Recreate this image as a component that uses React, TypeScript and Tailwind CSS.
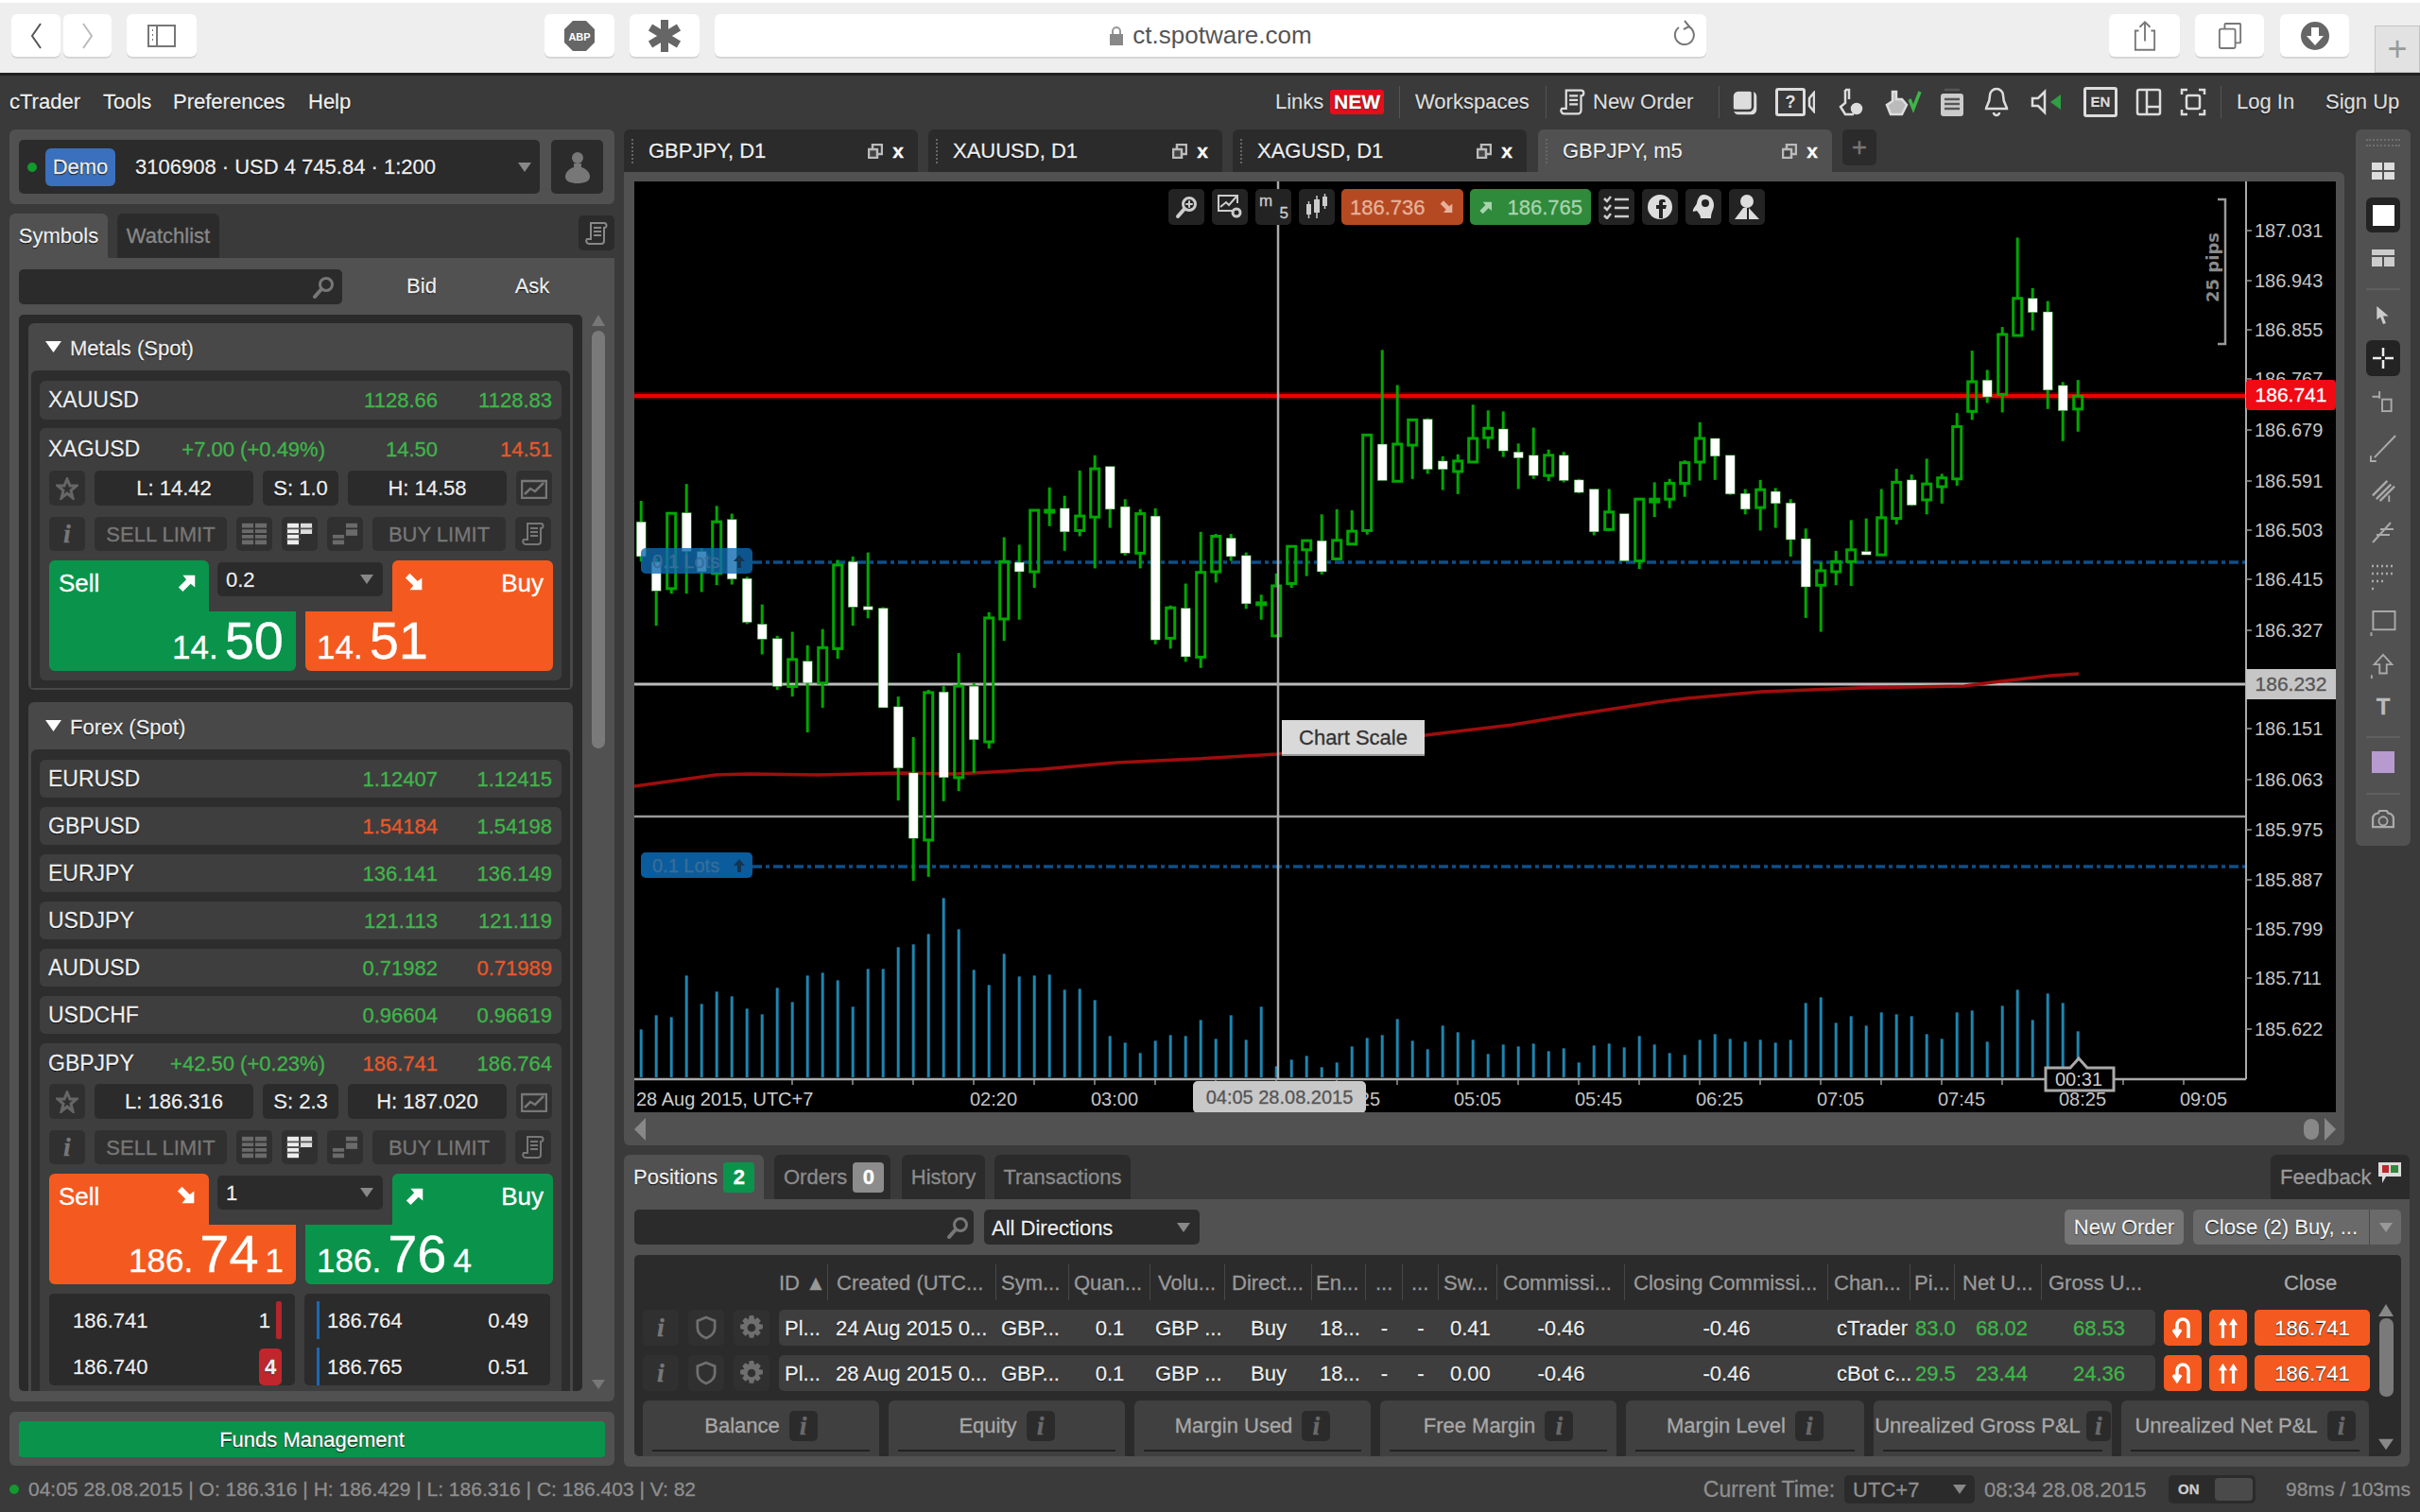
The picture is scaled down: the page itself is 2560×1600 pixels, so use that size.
import React from "react";

const ts = "[text-shadow:0_0_1px_#000,0_1px_1px_#000]";
const G = "text-[#3fb54a]";
const R = "text-[#e8582a]";

const Mag = ({ className = "w-[24px] h-[24px]", plus = false }: { className?: string; plus?: boolean }) => (
  <svg viewBox="0 0 24 24" className={className} fill="none" stroke="currentColor" strokeWidth="3" strokeLinecap="round">
    <circle cx="15" cy="9" r="6.5" />
    <path d="M10 14 L3 22" strokeWidth="4" />
    {plus && <path d="M15 6v6M12 9h6" strokeWidth="2" />}
  </svg>
);
const Scroll = ({ className = "w-[26px] h-[30px]" }: { className?: string }) => (
  <svg viewBox="0 0 24 28" className={className} fill="none" stroke="currentColor" strokeWidth="2">
    <path d="M6 3h14a2 2 0 0 1 0 5v14a3 3 0 0 1-3 3H4a3 3 0 0 1-2-5h4z" />
    <path d="M9 8h8M9 12h8M9 16h8" />
  </svg>
);
const Caret = ({ className = "" }: { className?: string }) => (
  <svg viewBox="0 0 14 10" className={`w-[14px] h-[10px] ${className}`} fill="currentColor"><path d="M0 0h14L7 10z" /></svg>
);
const Arrow = ({ down = false }: { down?: boolean }) => (
  <svg viewBox="0 0 24 24" className="w-[22px] h-[22px]" fill="#fff">
    <path transform={down ? "rotate(90 12 12)" : undefined} d="M2 18 L11 9 L7 4 H21 V18 L16 14 L7 23 Z" />
  </svg>
);
const Bars = ({ mode }: { mode: number }) => (
  <svg viewBox="0 0 30 26" className="w-[28px] h-[26px]">
    {mode === 0 && (<g fill="#6a6a6a"><rect x="1" y="1" width="13" height="24" /><rect x="16" y="1" width="13" height="24" /><path d="M0 7h30M0 13h30M0 19h30" stroke="#303030" strokeWidth="2" /></g>)}
    {mode === 1 && (<g><rect x="1" y="1" width="13" height="24" fill="#eee" /><rect x="16" y="1" width="13" height="12" fill="#ddd" /><path d="M0 7h30M0 13h16M0 19h16" stroke="#555" strokeWidth="2" /></g>)}
    {mode === 2 && (<g fill="#6a6a6a"><rect x="1" y="14" width="13" height="11" /><rect x="16" y="1" width="13" height="14" /><path d="M0 19h14M16 7h14" stroke="#303030" strokeWidth="2" /></g>)}
  </svg>
);
const Info = ({ className = "text-[#777]" }: { className?: string }) => (
  <span className={`[font-family:'Liberation_Serif',serif] italic font-bold text-[28px] leading-none ${className}`}>i</span>
);
const Square = ({ children, className = "" }: { children?: React.ReactNode; className?: string }) => (
  <div className={`w-[38px] h-full rounded-[5px] bg-[#303030] flex items-center justify-center text-[#777] shrink-0 ${className}`}>{children}</div>
);

function ChromeBtn({ className, children }: { className: string; children?: React.ReactNode }) {
  return <div className={`h-[45px] bg-white rounded-[6px] shadow-[0_2px_0_#d6d6d6] flex items-center justify-center shrink-0 ${className}`}>{children}</div>;
}

function BrowserBar() {
  return (
    <div className="h-[77px] bg-[#eeeeee] border-t-[3px] border-white pt-[12px] flex items-start shrink-0 text-[#666] [-webkit-text-stroke:0]">
      <ChromeBtn className="w-[52px] ml-[12px]"><svg viewBox="0 0 14 30" className="w-[14px] h-[30px]" fill="none" stroke="#555" strokeWidth="2"><path d="M12 2 L3 15 L12 28" /></svg></ChromeBtn>
      <ChromeBtn className="w-[51px] ml-[3px]"><svg viewBox="0 0 14 30" className="w-[14px] h-[30px]" fill="none" stroke="#bbb" strokeWidth="2"><path d="M2 2 L11 15 L2 28" /></svg></ChromeBtn>
      <ChromeBtn className="w-[74px] ml-[16px]"><svg viewBox="0 0 30 24" className="w-[30px] h-[24px]" fill="none" stroke="#777" strokeWidth="2"><rect x="1" y="1" width="28" height="22" /><path d="M10 1v22M5 6h1M5 11h1M5 16h1" /></svg></ChromeBtn>
      <ChromeBtn className="w-[74px] ml-[368px]">
        <svg viewBox="0 0 34 34" className="w-[34px] h-[34px]"><path d="M10 1h14l9 9v14l-9 9H10l-9-9V10z" fill="#666" /><text x="17" y="22" fontSize="11" fontWeight="700" textAnchor="middle" fill="#fff" fontFamily="Liberation Sans">ABP</text></svg>
      </ChromeBtn>
      <ChromeBtn className="w-[74px] ml-[16px]"><svg viewBox="0 0 36 36" className="w-[36px] h-[36px]" stroke="#666" strokeWidth="8"><path d="M18 1v34M3 9l30 18M33 9L3 27" /></svg></ChromeBtn>
      <ChromeBtn className="w-[1049px] ml-[16px] relative">
        <div className="flex items-center gap-[9px]">
          <svg viewBox="0 0 16 22" className="w-[16px] h-[22px]"><path d="M4 9V6a4 4 0 0 1 8 0v3" fill="none" stroke="#999" strokeWidth="2" /><rect x="1" y="9" width="14" height="12" fill="#888" /></svg>
          <span className="text-[26px] text-[#555]">ct.spotware.com</span>
        </div>
        <svg viewBox="0 0 24 30" className="absolute right-[12px] top-[6px] w-[24px] h-[30px]" fill="none" stroke="#777" strokeWidth="2"><path d="M17 7A10 10 0 1 1 7 8" /><path d="M13 1l5 6-6 3" /></svg>
      </ChromeBtn>
      <ChromeBtn className="w-[75px] ml-[426px]"><svg viewBox="0 0 26 36" className="w-[24px] h-[34px]" fill="none" stroke="#777" strokeWidth="2"><path d="M6 12H2v22h22V12h-4M13 24V2M7 8l6-6 6 6" /></svg></ChromeBtn>
      <ChromeBtn className="w-[73px] ml-[16px]"><svg viewBox="0 0 28 32" className="w-[26px] h-[30px]" fill="none" stroke="#777" strokeWidth="2"><rect x="2" y="8" width="18" height="22" rx="2" /><path d="M8 8V3a1 1 0 0 1 1-1h16a1 1 0 0 1 1 1v20a1 1 0 0 1-1 1h-5" /></svg></ChromeBtn>
      <ChromeBtn className="w-[73px] ml-[17px]"><svg viewBox="0 0 30 30" className="w-[30px] h-[30px]"><circle cx="15" cy="15" r="15" fill="#666" /><path d="M11 6h8v9h5l-9 10-9-10h5z" fill="#fff" /></svg></ChromeBtn>
      <div className="ml-[27px] mt-[12px] w-[48px] h-[50px] bg-[#e2e2e2] border border-[#c4c4c4] flex items-center justify-center text-[#999] text-[36px] font-light">+</div>
    </div>
  );
}

const Sep = ({ className }: { className: string }) => <div className={`w-px h-[34px] bg-[#555] ${className}`} />;

function TopIcon({ className, children, vb }: { className: string; children: React.ReactNode; vb: string }) {
  return <svg viewBox={vb} className={`h-[34px] shrink-0 ${className}`} fill="none" stroke="#ddd" strokeWidth="2.5">{children}</svg>;
}

function MenuBar() {
  return (
    <div className={`h-[58px] bg-[#3a3a3a] border-t-[3px] border-[#222] flex items-center shrink-0 text-[22px] text-[#eee] whitespace-nowrap ${ts}`}>
      <span className="ml-[10px] w-[99px]">cTrader</span>
      <span className="w-[74px]">Tools</span>
      <span className="w-[143px]">Preferences</span>
      <span>Help</span>
      <div className="ml-auto flex items-center text-[#ddd]">
        <span className="w-[53px]">Links</span>
        <span className="ml-[5px] w-[57px] h-[26px] leading-[26px] text-center bg-[#e60d1c] text-white font-bold rounded-[3px] text-[21px]">NEW</span>
        <Sep className="ml-[16px]" />
        <span className="ml-[16px] w-[122px]">Workspaces</span>
        <Sep className="ml-[16px]" />
        <Scroll className="ml-[14px] w-[27px] h-[34px] shrink-0" />
        <span className="ml-[8px] w-[107px]">New Order</span>
        <Sep className="ml-[26px]" />
        <TopIcon vb="0 0 30 34" className="ml-[12px] w-[30px]"><rect x="4" y="7" width="22" height="22" rx="4" fill="#ddd" /><rect x="1" y="4" width="22" height="22" rx="4" stroke="#3a3a3a" /></TopIcon>
        <div className="ml-[17px] w-[42px] h-[34px] flex items-center shrink-0">
          <div className="w-[32px] h-[30px] border-[3px] border-[#ddd] rounded-[3px] text-[18px] leading-[24px] text-center font-bold">?</div>
          <svg viewBox="0 0 8 24" className="ml-[2px] w-[8px] h-[24px]" fill="none" stroke="#ddd" strokeWidth="2.500"><path d="M7 2L2 8v8l5 6z" /></svg>
        </div>
        <TopIcon vb="0 0 30 34" className="ml-[22px] w-[30px]"><path d="M10 4v14l-5 4 5 8h9M10 4h4v10" /><circle cx="22" cy="24" r="5" fill="#ddd" /></TopIcon>
        <TopIcon vb="0 0 44 34" className="ml-[20px] w-[44px]"><path d="M10 6v10l-6 4 4 10h12l5-10-5-6h-6V6z" fill="#bbb" /><path d="M28 14l4 10 7-18" stroke="#3fb54a" strokeWidth="3.5" /></TopIcon>
        <TopIcon vb="0 0 28 34" className="ml-[15px] w-[28px]"><rect x="2" y="8" width="24" height="24" rx="3" fill="#ccc" stroke="none" /><path d="M6 4h16M6 14h16M6 19h16M6 24h16" stroke="#555" /></TopIcon>
        <TopIcon vb="0 0 26 34" className="ml-[20px] w-[26px]"><path d="M13 3a7 7 0 0 1 7 7c0 9 4 11 4 14H2c0-3 4-5 4-14a7 7 0 0 1 7-7zM10 28a3 3 0 0 0 6 0" /></TopIcon>
        <TopIcon vb="0 0 34 34" className="ml-[23px] w-[34px]"><path d="M2 13h6l7-7v22l-7-7H2z" /><path d="M21 17l11-8v16z" fill="#2f9e44" stroke="none" /></TopIcon>
        <div className="ml-[22px] w-[36px] h-[32px] shrink-0 border-[3px] border-[#ddd] rounded-[3px] text-[15px] leading-[26px] text-center font-bold">EN</div>
        <TopIcon vb="0 0 28 34" className="ml-[19px] w-[28px]"><rect x="2" y="4" width="24" height="26" rx="2" /><path d="M12 4v26M12 22h14" /></TopIcon>
        <TopIcon vb="0 0 28 34" className="ml-[19px] w-[28px]"><rect x="7" y="10" width="14" height="14" rx="2" /><path d="M2 9V4h6M20 4h6v5M2 25v5h6M20 30h6v-5" /></TopIcon>
        <Sep className="ml-[15px]" />
        <span className="ml-[16px] w-[61px]">Log In</span>
        <span className="ml-[33px] w-[78px] mr-[22px]">Sign Up</span>
      </div>
    </div>
  );
}

function SymRow({ name, change, bid, ask, bidRed, askRed }: { name: string; change?: string; bid: string; ask: string; bidRed?: boolean; askRed?: boolean }) {
  return (
    <div className="flex items-center pl-[9px] pr-[10px] text-[22px] whitespace-nowrap">
      <span className={`flex-1 text-[23px] text-[#eee] ${ts}`}>{name}</span>
      {change && <span className={G}>{change}</span>}
      <span className={`w-[119px] text-right ${bidRed ? R : G}`}>{bid}</span>
      <span className={`w-[121px] text-right ${askRed ? R : G}`}>{ask}</span>
    </div>
  );
}

function Collapsed(p: { name: string; bid: string; ask: string; bidRed?: boolean; askRed?: boolean; className?: string }) {
  return (
    <div className={`rounded-[6px] bg-[#3e3e3e] h-[40px] flex flex-col justify-center ${p.className ?? ""}`}>
      <SymRow {...p} />
    </div>
  );
}

function PriceBig({ a, b, c }: { a: string; b: string; c?: string }) {
  return (
    <div className="flex items-baseline text-white">
      <span className="text-[35px] leading-none">{a}</span>
      <span className="text-[56px] leading-none ml-[7px]">{b}</span>
      {c && <span className="text-[35px] leading-none ml-[7px]">{c}</span>}
    </div>
  );
}

function Expanded({ name, change, bid, ask, bidRed, askRed, low, spread, high, qty, sellColor, buyColor, sellUp, sellPrice, buyPrice, depth, headH }: {
  name: string; change: string; bid: string; ask: string; bidRed?: boolean; askRed?: boolean; low: string; spread: string; high: string; qty: string;
  sellColor: string; buyColor: string; sellUp: boolean; sellPrice: [string, string, string?]; buyPrice: [string, string, string?]; depth?: boolean; headH: string;
}) {
  const field = "rounded-[5px] bg-[#2b2b2b] flex items-center justify-center text-[22px] text-[#eee] h-full";
  const lim = "rounded-[5px] bg-[#303030] flex items-center justify-center text-[22px] text-[#777] h-full";
  return (
    <div className="rounded-[6px] bg-[#3e3e3e] pb-[10px] w-full">
      <div className={`flex flex-col justify-center ${headH}`}><SymRow name={name} change={change} bid={bid} ask={ask} bidRed={bidRed} askRed={askRed} /></div>
      <div className="pl-[10px]">
        <div className="flex h-[37px] gap-[10px]">
          <Square><svg viewBox="0 0 24 24" className="w-[24px] h-[24px]" fill="none" stroke="#666" strokeWidth="3"><path d="M12 2l3 7h7l-6 5 2 8-6-5-6 5 2-8-6-5h7z" /></svg></Square>
          <div className={`w-[168px] ${field} ${ts}`}>{low}</div>
          <div className={`w-[80px] ${field} ${ts}`}>{spread}</div>
          <div className={`w-[168px] ${field} ${ts}`}>{high}</div>
          <Square><svg viewBox="0 0 28 22" className="w-[28px] h-[22px]" fill="none" stroke="#777" strokeWidth="2.5"><rect x="1" y="3" width="26" height="18" /><path d="M4 17l6-6 5 3 9-9" /></svg></Square>
        </div>
        <div className="flex h-[36px] gap-[10px] mt-[12px]">
          <Square><Info /></Square>
          <div className={`w-[140px] ${lim}`}>SELL LIMIT</div>
          <Square><Bars mode={0} /></Square>
          <Square><Bars mode={1} /></Square>
          <Square><Bars mode={2} /></Square>
          <div className={`w-[141px] ${lim}`}>BUY LIMIT</div>
          <Square><Scroll className="w-[24px] h-[28px]" /></Square>
        </div>
        <div className="mt-[10px] w-[533px]">
          <div className="flex items-start h-[54px]">
            <div className={`w-[169px] h-full rounded-t-[6px] flex items-start justify-between pl-[10px] pr-[12px] pt-[5px] text-white text-[26px] ${sellColor}`}>
              <span>Sell</span><span className="mt-[7px]"><Arrow down={!sellUp} /></span>
            </div>
            <div className="ml-[9px] mt-[2px] w-[175px] h-[36px] rounded-[5px] bg-[#2b2b2b] flex items-center justify-between pl-[9px] pr-[10px] text-[22px] text-[#eee]">
              <span className={ts}>{qty}</span><Caret className="text-[#888]" />
            </div>
            <div className={`ml-[10px] w-[170px] h-full rounded-t-[6px] flex items-start justify-between pl-[13px] pr-[10px] pt-[5px] text-white text-[26px] ${buyColor}`}>
              <span className="mt-[7px]"><Arrow down={sellUp} /></span><span>Buy</span>
            </div>
          </div>
          <div className="flex gap-[10px] h-[63px]">
            <div className={`w-[261px] rounded-b-[6px] rounded-tl-none flex items-end justify-end pr-[13px] pb-[4px] ${sellColor}`}><PriceBig a={sellPrice[0]} b={sellPrice[1]} c={sellPrice[2]} /></div>
            <div className={`w-[262px] rounded-b-[6px] flex items-end pl-[12px] pb-[4px] ${buyColor}`}><PriceBig a={buyPrice[0]} b={buyPrice[1]} c={buyPrice[2]} /></div>
          </div>
        </div>
        {depth && (
          <div className={`flex gap-[10px] mt-[10px] text-[22px] text-[#eee] ${ts}`}>
            <div className="w-[260px] bg-[#2b2b2b] rounded-[5px] pt-[8px] flex flex-col gap-[9px]">
              <div className="h-[40px] flex items-center pl-[25px] pr-[14px]"><span>186.741</span><span className="ml-auto">1</span><span className="ml-[6px] w-[6px] h-[40px] bg-[#b3262b] rounded-[2px]" /></div>
              <div className="h-[40px] flex items-center pl-[25px] pr-[14px]"><span>186.740</span><span className="ml-auto w-[24px] h-[39px] bg-[#c0272d] rounded-[5px] text-center leading-[39px] font-bold">4</span></div>
            </div>
            <div className="w-[260px] bg-[#2b2b2b] rounded-[5px] pt-[8px] pl-[13px] pr-[23px] flex flex-col gap-[9px]">
              <div className="h-[40px] flex items-center"><span className="w-[3px] h-[40px] bg-[#1d68b5]" /><span className="ml-[8px]">186.764</span><span className="ml-auto">0.49</span></div>
              <div className="h-[40px] flex items-center"><span className="w-[3px] h-[40px] bg-[#1d68b5]" /><span className="ml-[8px]">186.765</span><span className="ml-auto">0.51</span></div>
            </div>
          </div>
        )}
      </div>
    </div>
  );
}

function Group({ title, children, className = "" }: { title: string; children: React.ReactNode; className?: string }) {
  return (
    <div className={`rounded-[6px] bg-[#484848] w-[576px] px-[3px] pb-[2px] ${className}`}>
      <div className={`h-[50px] flex items-center pt-[3px] pl-[15px] text-[22px] text-[#eee] ${ts}`}>
        <Caret className="w-[17px] h-[14px] text-white mr-[9px] -mt-[4px]" />{title}
      </div>
      <div className="bg-[#2d2d2d] rounded-t-[6px] px-[9px] pt-[11px] pb-[8px] flex flex-col">{children}</div>
    </div>
  );
}

function LeftColumn() {
  return (
    <div className="w-[640px] shrink-0 flex flex-col">
      <div className="h-[79px] bg-[#515151] rounded-[6px] px-[10px] flex items-center">
        <div className="w-[551px] h-[57px] rounded-[5px] bg-[#2b2b2b] flex items-center text-[22px] text-[#eee] whitespace-nowrap">
          <span className="ml-[9px] w-[10px] h-[10px] rounded-full bg-[#119a2d]" />
          <span className={`ml-[9px] w-[74px] h-[40px] rounded-[6px] bg-[#3a70bd] text-center leading-[40px] ${ts}`}>Demo</span>
          <span className={`ml-[21px] ${ts}`}>3106908 · USD 4 745.84 · 1:200</span>
          <Caret className="ml-auto mr-[9px] text-[#888]" />
        </div>
        <div className="ml-[12px] w-[55px] h-[57px] rounded-[5px] bg-[#2b2b2b] flex items-center justify-center">
          <svg viewBox="0 0 28 36" className="w-[28px] h-[36px]" fill="#777"><circle cx="14" cy="8" r="6" /><path d="M10 14h8v4c6 2 9 6 9 10 0 5-6 7-13 7S1 33 1 28c0-4 3-8 9-10z" /></svg>
        </div>
      </div>
      <div className="mt-[10px] h-[47px] flex items-end text-[22px] whitespace-nowrap">
        <div className={`w-[104px] h-full bg-[#515151] rounded-t-[6px] flex items-center justify-center text-[#eee] ${ts}`}>Symbols</div>
        <div className="ml-[10px] w-[108px] h-full bg-[#2b2b2b] rounded-t-[6px] flex items-center justify-center text-[#888]">Watchlist</div>
        <div className="ml-auto mb-[8px] w-[38px] h-[37px] bg-[#2b2b2b] rounded-[5px] flex items-center justify-center text-[#888]"><Scroll className="w-[24px] h-[28px]" /></div>
      </div>
      <div className="h-[1210px] bg-[#515151] rounded-b-[6px] pl-[10px] pt-[12px] flex flex-col">
        <div className="flex h-[37px] items-center text-[22px] text-[#eee]">
          <div className="w-[342px] h-full rounded-[5px] bg-[#2b2b2b] flex items-center justify-end pr-[8px] text-[#777]"><Mag /></div>
          <span className={`w-[168px] text-center -mt-[2px] ${ts}`}>Bid</span>
          <span className={`w-[66px] text-center -mt-[2px] ${ts}`}>Ask</span>
        </div>
        <div className="mt-[11px] flex h-[1139px]">
          <div className="w-[596px] h-full rounded-[5px] bg-[#2a2a2a] overflow-hidden pl-[10px] pt-[9px]">
            <Group title="Metals (Spot)">
              <Collapsed name="XAUUSD" bid="1128.66" ask="1128.83" className="h-[41px] mb-[9px]" />
              <Expanded name="XAGUSD" change="+7.00 (+0.49%)" bid="14.50" ask="14.51" askRed low="L: 14.42" spread="S: 1.0" high="H: 14.58" qty="0.2"
                sellColor="bg-[#0a944b]" buyColor="bg-[#f45a1f]" sellUp sellPrice={["14.", "50"]} buyPrice={["14.", "51"]} headH="h-[45px]" />
            </Group>
            <Group title="Forex (Spot)" className="mt-[13px]">
              <Collapsed name="EURUSD" bid="1.12407" ask="1.12415" className="mb-[10px]" />
              <Collapsed name="GBPUSD" bid="1.54184" ask="1.54198" bidRed className="mb-[10px]" />
              <Collapsed name="EURJPY" bid="136.141" ask="136.149" className="mb-[10px]" />
              <Collapsed name="USDJPY" bid="121.113" ask="121.119" className="mb-[10px]" />
              <Collapsed name="AUDUSD" bid="0.71982" ask="0.71989" askRed className="mb-[10px]" />
              <Collapsed name="USDCHF" bid="0.96604" ask="0.96619" className="mb-[10px]" />
              <Expanded name="GBPJPY" change="+42.50 (+0.23%)" bid="186.741" ask="186.764" bidRed low="L: 186.316" spread="S: 2.3" high="H: 187.020" qty="1"
                sellColor="bg-[#f45a1f]" buyColor="bg-[#0a944b]" sellUp={false} sellPrice={["186.", "74", "1"]} buyPrice={["186.", "76", "4"]} depth headH="h-[43px]" />
            </Group>
          </div>
          <div className="ml-[9px] w-[15px] h-full flex flex-col items-center">
            <svg viewBox="0 0 14 12" className="w-[14px] h-[12px] text-[#777]" fill="currentColor"><path d="M7 0l7 12H0z" /></svg>
            <div className="mt-[5px] h-[442px] w-[14px] rounded-[7px] bg-[#7a7a7a]" />
            <Caret className="mt-auto mb-[2px] text-[#777]" />
          </div>
        </div>
      </div>
      <div className="mt-[11px] h-[57px] bg-[#515151] rounded-[6px] p-[10px]">
        <div className={`h-[38px] rounded-[4px] bg-[#0a944b] flex items-center justify-center text-[22px] text-white ${ts}`}>Funds Management</div>
      </div>
    </div>
  );
}

function ChartTab({ label, active, className = "" }: { label: string; active?: boolean; className?: string }) {
  return (
    <div className={`w-[311px] rounded-t-[6px] flex items-center pl-[8px] pr-[15px] text-[22px] text-[#eee] h-full ${active ? "bg-[#515151]" : "bg-[#2b2b2b]"} ${className}`}>
      <span className="w-[3px] h-[26px] border-l-2 border-dotted border-[#666]" />
      <span className={`ml-[15px] ${ts}`}>{label}</span>
      <svg viewBox="0 0 16 16" className="ml-auto w-[16px] h-[16px]" fill="none" stroke="#bbb" strokeWidth="2.5"><rect x="5" y="1" width="10" height="10" /><rect x="1" y="6" width="9" height="9" fill="#444" /></svg>
      <span className={`ml-[10px] text-[21px] font-bold leading-none text-white`}>x</span>
    </div>
  );
}

const C: [0 | 1, number, number, number, number][] = [
  [1,980,1042,1145,1160],[1,1150,1160,1247,1350],[0,1017,1017,1240,1255],[1,930,1015,1130,1255],[1,1120,1130,1190,1250],[0,995,1042,1195,1230],[1,1018,1035,1212,1228],[1,1205,1210,1340,1345],
  [1,1287,1345,1390,1435],[1,1380,1388,1530,1540],[0,1368,1450,1530,1560],[1,1408,1455,1520,1666],[0,1360,1415,1520,1593],[0,1155,1170,1418,1448],[1,1145,1160,1295,1350],[1,1133,1293,1303,1328],
  [1,1295,1298,1593,1593],[1,1560,1590,1772,1868],[1,1680,1786,1980,2106],[0,1540,1548,1985,2094],[1,1529,1546,1800,1870],[0,1431,1529,1800,1840],[1,1520,1529,1688,1786],[0,1310,1327,1694,1714],
  [0,1088,1160,1330,1395],[1,1110,1162,1190,1332],[0,1008,1008,1190,1238],[0,940,1008,1012,1055],[1,965,1002,1072,1128],[0,890,1025,1068,1085],[0,845,885,1028,1180],[1,878,878,1005,1060],
  [1,975,997,1135,1142],[0,1005,1018,1135,1180],[1,1002,1025,1392,1405],[0,1290,1297,1387,1418],[1,1225,1298,1442,1457],[0,1072,1192,1443,1475],[0,1078,1085,1190,1222],[1,1078,1090,1145,1158],
  [1,1133,1142,1285,1300],[0,1258,1282,1285,1332],[0,1195,1232,1380,1380],[0,1112,1115,1225,1238],[0,1095,1098,1125,1203],[1,1020,1098,1190,1198],[0,1005,1097,1152,1155],[0,1008,1070,1108,1110],
  [0,783,785,1068,1080],[1,533,812,920,920],[0,637,812,922,922],[0,738,740,815,915],[1,735,738,887,900],[1,848,862,887,948],[0,842,862,893,960],[0,695,795,865,868],
  [0,712,765,793,825],[1,715,767,832,850],[1,810,835,853,945],[1,763,845,905,915],[0,828,845,905,922],[1,835,845,920,925],[1,915,918,955,958],[1,945,945,1072,1082],[0,945,1013,1065,1070],[1,1018,1018,1158,1160],
  [0,973,975,1158,1182],[0,925,975,983,1028],[0,915,928,975,1002],[0,860,867,928,968],[0,747,795,865,920],[1,795,795,848,918],[1,845,845,960,962],[1,945,958,1005,1020],[0,918,947,1000,1068],[1,942,952,988,1060],
  [1,975,986,1095,1145],[1,1062,1092,1235,1327],[0,1162,1187,1230,1368],[0,1128,1160,1190,1230],[0,1037,1125,1160,1232],[1,1032,1130,1140,1140],[0,945,1030,1140,1140],[0,885,925,1032,1050],[1,902,918,993,995],
  [0,855,930,977,1020],[0,900,912,938,988],[0,720,760,915,935],[0,535,627,715,740],[1,592,622,672,690],[0,465,487,665,718],[0,200,380,490,490],[1,350,380,422,475],[1,388,420,652,708],[1,628,638,713,803],[0,622,670,708,775],
];
const V = [1048,1003,1009,877,967,928,943,982,1000,916,961,877,868,892,976,856,856,787,778,745,631,730,859,907,808,880,877,874,922,919,955,1069,1090,1123,1084,1066,1069,1018,1078,1003,1081,976,1165,1144,1132,1168,1153,1102,1075,1066,1015,1084,1111,1036,1057,1081,1126,1096,1102,1093,1117,1108,1153,1099,1093,1105,1069,1096,1123,1129,1081,1063,1078,1087,1081,1090,1081,964,946,1027,1006,1036,994,1000,1006,1063,1078,994,988,1087,973,922,1018,934,964,1054];
const MA = "671,832 757,820 793,819 866,820 951,818 1011,819 1102,814 1181,807 1266,803 1351,798 1508,778 1600,767 1661,757 1753,743 1784,739 1863,732 1967,728 2078,726 2108,722 2169,715 2199,713";
const cx = (i: number) => 678.2 + 16 * i;
const cy = (Y: number) => 180 + Y / 2.8;
const YL: [string, number][] = [["187.031",244],["186.943",297],["186.855",349],["186.767",401],["186.679",455],["186.591",509],["186.503",561],["186.415",613],["186.327",667],["186.151",771],["186.063",825],["185.975",878],["185.887",931],["185.799",983],["185.711",1035],["185.622",1089]];
const XL: [string, number][] = [["02:20",1051],["03:00",1179],["04:25",1435],["05:05",1563],["05:45",1691],["06:25",1819],["07:05",1947],["07:45",2075],["08:25",2203],["09:05",2331]];

function ChartSvg() {
  return (
    <svg viewBox="671 192 1800 985" className="w-[1800px] h-[985px] block" fontFamily="Liberation Sans, sans-serif">
      {V.map((t, i) => <line key={i} x1={cx(i)} x2={cx(i)} y1={740 + t / 3} y2={1140} stroke="#1d86b0" strokeWidth="3" />)}
      <line x1="671" x2="2376" y1="419" y2="419" stroke="#4a0000" strokeWidth="8" />
      <line x1="671" x2="2376" y1="419" y2="419" stroke="#ee0000" strokeWidth="4" />
      <line x1="671" x2="2376" y1="724" y2="724" stroke="#bbb" strokeWidth="3" />
      <line x1="671" x2="2376" y1="864" y2="864" stroke="#999" strokeWidth="2.5" />
      <line x1="796" x2="2376" y1="595" y2="595" stroke="#0e4f88" strokeWidth="3.5" strokeDasharray="10 4 4 4" />
      <line x1="796" x2="2376" y1="917" y2="917" stroke="#0e4f88" strokeWidth="3.5" strokeDasharray="10 4 4 4" />
      <polyline points={MA} fill="none" stroke="#a00d0d" strokeWidth="3.5" />
      {C.map(([w, h, t, b, l], i) => {
        const x = cx(i);
        return (
          <g key={i}>
            <line x1={x} x2={x} y1={cy(h)} y2={cy(t)} stroke="#00a800" strokeWidth="3" />
            <line x1={x} x2={x} y1={cy(b)} y2={cy(l)} stroke="#00a800" strokeWidth="3" />
            {w === 1
              ? <rect x={x - 5} y={cy(t)} width="10" height={Math.max(cy(b) - cy(t), 3)} fill="#fff" stroke="#0a8a0a" strokeWidth="0.5" />
              : <rect x={x - 4.5} y={cy(t)} width="9" height={Math.max(cy(b) - cy(t), 2)} fill="none" stroke="#00a800" strokeWidth="3" />}
          </g>
        );
      })}
      <line x1="1352" x2="1352" y1="192" y2="1142" stroke="#aaa" strokeWidth="2.5" />
      <line x1="2376" x2="2376" y1="192" y2="1142" stroke="#aaa" strokeWidth="2" />
      <line x1="671" x2="2376" y1="1142" y2="1142" stroke="#aaa" strokeWidth="2.5" />
      {Array.from({ length: 24 }, (_, k) => <line key={k} x1={838 + 64 * k} x2={838 + 64 * k} y1="1143" y2="1148" stroke="#999" strokeWidth="1.5" />)}
      {YL.map(([s, y]) => (
        <g key={s}>
          <line x1="2376" x2="2382" y1={y} y2={y} stroke="#999" strokeWidth="1.5" />
          <text x="2385" y={y + 7} fontSize="20" fill="#c4c4c4">{s}</text>
        </g>
      ))}
      <text x="673" y="1170" fontSize="20" fill="#ccc">28 Aug 2015, UTC+7</text>
      {XL.map(([s, x]) => <text key={s} x={x} y="1170" fontSize="20" fill="#c4c4c4" textAnchor="middle">{s}</text>)}
      <path d="M2346 211h8v153h-8" fill="none" stroke="#999" strokeWidth="2.5" />
      <text transform="translate(2347 283) rotate(-90)" fontSize="18" fontWeight="700" fill="#8a8a8a" textAnchor="middle" fontFamily="DejaVu Sans, sans-serif">25 pips</text>
      <path d="M2164 1130h26l9-10 9 10h28v24h-72z" fill="#000" stroke="#aaa" strokeWidth="3" />
      <text x="2199" y="1149" fontSize="20" fill="#ccc" textAnchor="middle">00:31</text>
    </svg>
  );
}

const ChartBtn = ({ children }: { children?: React.ReactNode }) => (
  <div className="w-[38px] h-[38px] rounded-[5px] bg-[#232323] flex items-center justify-center text-[#ccc] shrink-0">{children}</div>
);

function LotTag({ className }: { className: string }) {
  return (
    <div className={`absolute left-[7px] w-[118px] h-[27px] rounded-[5px] flex items-center justify-between pl-[12px] pr-[8px] text-[20px] text-[#3a6d98] ${className}`}>
      <span>0.1 Lots</span>
      <svg viewBox="0 0 12 14" className="w-[12px] h-[14px]" fill="#16344f"><path d="M6 0l6 7H8v7H4V7H0z" /></svg>
    </div>
  );
}

function Chart() {
  return (
    <div className="relative w-[1800px] h-[985px] bg-black overflow-hidden">
      <ChartSvg />
      <LotTag className="top-[388px] bg-[#0f6cb0]/80" />
      <LotTag className="top-[710px] bg-[#0a5c9c]" />
      <div className="absolute left-[565px] top-[8px] flex gap-[8px]">
        <ChartBtn><Mag plus className="w-[24px] h-[26px]" /></ChartBtn>
        <ChartBtn><svg viewBox="0 0 28 28" className="w-[28px] h-[28px]" fill="none" stroke="#ccc" strokeWidth="2"><path d="M17 18H2V2h20v8" /><path d="M4 14l6-5 3 3 8-9" /><circle cx="21" cy="20" r="4" strokeWidth="3" /></svg></ChartBtn>
        <div className="w-[38px] h-[38px] rounded-[5px] bg-[#232323] relative text-[#ccc] text-[17px] shrink-0"><span className="absolute left-[4px] top-0">m</span><span className="absolute right-[3px] bottom-0">5</span></div>
        <ChartBtn><svg viewBox="0 0 26 28" className="w-[26px] h-[28px]" fill="#ccc"><rect x="2" y="11" width="5" height="11" /><rect x="10" y="6" width="6" height="14" /><rect x="19" y="3" width="5" height="10" /><path d="M4.500 8v18M13 2v24M21.500 0v16" stroke="#ccc" strokeWidth="1.500" /></svg></ChartBtn>
        <div className="-ml-[1px] w-[129px] h-[38px] rounded-[5px] bg-[#b54a22] flex items-center justify-between px-[9px] text-[22px] text-[#e6b19b] shrink-0">
          <span>186.736</span><svg viewBox="0 0 24 24" className="w-[16px] h-[16px]" fill="#e6b19b"><path transform="rotate(90 12 12)" d="M2 18 L11 9 L7 4 H21 V18 L16 14 L7 23 Z" /></svg>
        </div>
        <div className="-ml-[1px] w-[128px] h-[38px] rounded-[5px] bg-[#2f8a3b] flex items-center justify-between px-[9px] text-[22px] text-[#a7d4ad] shrink-0">
          <svg viewBox="0 0 24 24" className="w-[16px] h-[16px]" fill="#a7d4ad"><path d="M2 18 L11 9 L7 4 H21 V18 L16 14 L7 23 Z" /></svg><span>186.765</span>
        </div>
        <ChartBtn><svg viewBox="0 0 28 26" className="w-[28px] h-[26px]" fill="none" stroke="#ccc" strokeWidth="2.5"><path d="M1 4l3 3 4-5M1 13l3 3 4-5M1 22l3 3 4-5M12 5h15M12 14h15M12 23h15" /></svg></ChartBtn>
        <ChartBtn><svg viewBox="0 0 28 28" className="w-[28px] h-[28px]"><circle cx="14" cy="14" r="13" fill="#ddd" /><path d="M19 6h-3a3 3 0 0 0-3 3v3h-3v4h3v10h4V16h3l1-4h-4V9h3z" fill="#232323" /></svg></ChartBtn>
        <ChartBtn><svg viewBox="0 0 26 28" className="w-[26px] h-[28px]" fill="#ddd"><path d="M13 1c7 0 11 5 11 11 0 5-3 7-3 14H10c0-4-2-5-4-8l-4 1c-1-3 3-6 4-9 1-5 3-9 7-9z" /><circle cx="15" cy="10" r="4" fill="#232323" /></svg></ChartBtn>
        <ChartBtn><svg viewBox="0 0 28 28" className="w-[28px] h-[28px]" fill="#ddd"><circle cx="14" cy="8" r="7" /><path d="M1 27L10 15h4v12zM16 15l11 12H16z" /></svg></ChartBtn>
      </div>
      <div className="absolute left-[685px] top-[570px] w-[151px] h-[38px] bg-[#d9d9d9] border-b-2 border-[#999] flex items-center justify-center text-[22px] text-[#333]">Chart Scale</div>
      <div className="absolute left-[1705px] top-[210px] w-[95px] h-[32px] bg-[#f00a14] rounded-[4px] flex items-center justify-center text-[21px] text-white">186.741</div>
      <div className="absolute left-[1705px] top-[516px] w-[95px] h-[32px] bg-[#c6c6c6] flex items-center justify-center text-[21px] text-[#555]">186.232</div>
      <div className="absolute left-[591px] top-[952px] w-[183px] h-[34px] bg-[#c8c8c8] rounded-[5px] flex items-center justify-center text-[20px] text-[#555]">04:05 28.08.2015</div>
    </div>
  );
}

function ToolIcon({ className, vb, children }: { className: string; vb: string; children: React.ReactNode }) {
  return <svg viewBox={vb} className={`shrink-0 ${className}`} fill="none" stroke="#aaa" strokeWidth="2">{children}</svg>;
}
const ToolSep = ({ className }: { className: string }) => <div className={`w-[36px] h-[2px] bg-[#5f5f5f] shrink-0 ${className}`} />;

function Toolbar() {
  return (
    <div className="ml-[12px] w-[58px] h-[758px] bg-[#515151] rounded-[6px] flex flex-col items-center">
      <div className="mt-[10px] w-[36px] h-[8px] border-y-2 border-dotted border-[#6f6f6f] shrink-0" />
      <ToolIcon vb="0 0 24 18" className="mt-[17px] w-[24px] h-[18px]"><path d="M0 0h11v8H0zM13 0h11v8H13zM0 10h11v8H0zM13 10h11v8H13z" fill="#ddd" stroke="none" /></ToolIcon>
      <div className="mt-[19px] w-[36px] h-[37px] rounded-[6px] bg-[#232323] flex items-center justify-center shrink-0"><div className="w-[23px] h-[22px] bg-white" /></div>
      <ToolIcon vb="0 0 24 18" className="mt-[18px] w-[24px] h-[18px]"><path d="M0 0h24v6H0zM0 8h11v10H0zM13 8h11v10H13z" fill="#ccc" stroke="none" /></ToolIcon>
      <ToolSep className="mt-[23px]" />
      <ToolIcon vb="0 0 16 22" className="mt-[16px] w-[16px] h-[21px]"><path d="M1 1v15l4-3 3 8 3-1-3-8h6z" fill="#ccc" stroke="none" /></ToolIcon>
      <div className="mt-[16px] w-[36px] h-[38px] rounded-[6px] bg-[#232323] flex items-center justify-center shrink-0"><svg viewBox="0 0 24 24" className="w-[24px] h-[24px]" stroke="#eee" strokeWidth="2.500"><path d="M12 1v9M12 14v9M1 12h9M14 12h9" /></svg></div>
      <ToolIcon vb="0 0 24 24" className="mt-[16px] w-[24px] h-[23px]"><path d="M8 0v8M0 6h8" /><rect x="11" y="9" width="10" height="13" /></ToolIcon>
      <ToolIcon vb="0 0 30 30" className="mt-[23px] w-[29px] h-[29px]"><path d="M28 1L5 25" /><path d="M1 23v6h6" /></ToolIcon>
      <ToolIcon vb="0 0 28 28" className="mt-[16px] w-[27px] h-[27px]"><path d="M2 20L18 4M6 24L22 8M10 26L26 10" strokeWidth="2.500" /><path d="M20 20v7" /></ToolIcon>
      <ToolIcon vb="0 0 24 24" className="mt-[19px] w-[24px] h-[24px]"><path d="M1 23L20 2M5 15h14M9 9h14" /></ToolIcon>
      <ToolIcon vb="0 0 28 30" className="mt-[21px] w-[28px] h-[30px]"><path d="M2 3h24M2 11h24M2 19h12M2 27h4" strokeDasharray="2 3" strokeWidth="2.500" /></ToolIcon>
      <ToolIcon vb="0 0 28 28" className="mt-[20px] w-[28px] h-[27px]"><rect x="3" y="1" width="24" height="20" /><path d="M1 24v4" /></ToolIcon>
      <ToolIcon vb="0 0 28 30" className="mt-[18px] w-[28px] h-[28px]"><path d="M14 2l10 11h-6v10H10V13H4z" /><path d="M1 25v4" /></ToolIcon>
      <div className="mt-[20px] h-[18px] text-[24px] leading-[18px] font-bold text-[#bbb] shrink-0">T</div>
      <ToolSep className="mt-[22px]" />
      <div className="mt-[14px] w-[24px] h-[23px] bg-[#b79ad0] shrink-0" />
      <ToolSep className="mt-[21px]" />
      <ToolIcon vb="0 0 28 22" className="mt-[16px] w-[28px] h-[20px]"><path d="M2 20V10a6 6 0 0 1 6-6l2-3h8l2 3a6 6 0 0 1 6 6v10z" strokeWidth="2.500" /><circle cx="14" cy="13" r="5" /></ToolIcon>
    </div>
  );
}

const cols = ["w-[52px]","w-[178px]","w-[77px]","w-[86px]","w-[79px]","w-[92px]","w-[57px]","w-[39px]","w-[38px]","w-[62px]","w-[135px]","w-[215px]","w-[87px]","w-[47px]","w-[92px]","w-[120px]"];
const heads = ["ID ▲","Created  (UTC...","Sym...","Quan...","Volu...","Direct...","En...","...","...","Sw...","Commissi...","Closing Commissi...","Chan...","Pi...","Net U...","Gross U..."];
const hpads = ["","pl-[9px]","pl-[5px]","pl-[5px]","pl-[8px]","pl-[7px]","pl-[4px]","pl-[10px]","pl-[9px]","pl-[5px]","pl-[6px]","pl-[9px]","pl-[6px]","pl-[4px]","pl-[8px]","pl-[7px]"];
const pads = ["pl-[6px]","pl-[8px]","pl-[5px]","text-center","pl-[5px]","text-center","pl-[8px]","text-center","text-center","pl-[12px]","text-center","text-center","pl-[9px]","pl-[5px]","pl-[22px]","pl-[33px]"];
const rows = [
  ["Pl...","24 Aug 2015 0...","GBP...","0.1","GBP ...","Buy","18...","-","-","0.41","-0.46","-0.46","cTrader","83.0","68.02","68.53"],
  ["Pl...","28 Aug 2015 0...","GBP...","0.1","GBP ...","Buy","18...","-","-","0.00","-0.46","-0.46","cBot c...","29.5","23.44","24.36"],
];
const tiles: [string, string, boolean][] = [["Balance","w-[250px]",false],["Equity","w-[250px]",false],["Margin Used","w-[250px]",false],["Free Margin","w-[250px]",false],["Margin Level","w-[252px]",false],["Unrealized Gross P&L","w-[252px]",true],["Unrealized Net P&L","w-[262px]",false]];

function OrangeBtn({ className, children }: { className: string; children: React.ReactNode }) {
  return <div className={`h-[38px] rounded-[5px] bg-[#f45a1f] flex items-center justify-center text-white text-[22px] shrink-0 ${className}`}>{children}</div>;
}

function PositionRow({ r }: { r: string[] }) {
  return (
    <div className="flex h-[38px] pl-[9px]">
      <div className="flex gap-[10px] h-full">
        <Square><Info /></Square>
        <Square><svg viewBox="0 0 24 28" className="w-[22px] h-[26px]" fill="none" stroke="#6f6f6f" strokeWidth="3"><path d="M12 2l10 4v8c0 6-5 10-10 12C7 24 2 20 2 14V6z" /></svg></Square>
        <Square><svg viewBox="0 0 24 24" className="w-[26px] h-[26px]" fill="#6f6f6f"><path d="M10 0h4l1 4 3-2 3 3-2 3 4 1v4l-4 1 2 3-3 3-3-2-1 4h-4l-1-4-3 2-3-3 2-3-4-1v-4l4-1-2-3 3-3 3 2z" /><circle cx="12" cy="12" r="4" fill="#303030" /></svg></Square>
      </div>
      <div className="ml-[10px] w-[1456px] h-full rounded-[5px] bg-[#3e3e3e] flex items-center text-[22px] whitespace-nowrap">
        {r.map((c, i) => <span key={i} className={`${cols[i]} ${pads[i]} shrink-0 ${i >= 13 ? G : `text-[#eee] ${ts}`}`}>{c}</span>)}
      </div>
      <OrangeBtn className="ml-[9px] w-[40px]"><svg viewBox="0 0 22 26" className="w-[22px] h-[26px]" fill="none" stroke="#fff" strokeWidth="3.500"><path d="M17 24V10a6 6 0 0 0-12 0v8" /><path d="M1 15l4 6 4-6" /></svg></OrangeBtn>
      <OrangeBtn className="ml-[8px] w-[40px]"><svg viewBox="0 0 26 26" className="w-[24px] h-[26px]" stroke="#fff" strokeWidth="3.500" fill="#fff"><path d="M7 25V6M19 25V6" /><path d="M2 10l5-8 5 8zM14 10l5-8 5 8z" strokeWidth="0" /></svg></OrangeBtn>
      <OrangeBtn className="ml-[8px] w-[122px]"><span className={ts}>186.741</span></OrangeBtn>
    </div>
  );
}

function Lower() {
  const tab = "h-full rounded-t-[6px] flex items-center text-[22px]";
  return (
    <div className="mt-[10px] w-[1889px] flex flex-col">
      <div className="h-[47px] flex whitespace-nowrap">
        <div className={`${tab} w-[148px] bg-[#515151] text-[#eee] pl-[10px]`}><span className={ts}>Positions</span><span className="ml-[6px] w-[33px] h-[32px] bg-[#0a944b] rounded-[4px] text-center leading-[32px] font-bold text-white">2</span></div>
        <div className={`${tab} ml-[11px] w-[123px] bg-[#2b2b2b] text-[#8c8c8c] pl-[10px]`}><span>Orders</span><span className="ml-[6px] w-[33px] h-[32px] bg-[#8c8c8c] rounded-[4px] text-center leading-[32px] font-bold text-white">0</span></div>
        <div className={`${tab} ml-[12px] w-[88px] bg-[#2b2b2b] text-[#8c8c8c] justify-center`}>History</div>
        <div className={`${tab} ml-[10px] w-[144px] bg-[#2b2b2b] text-[#8c8c8c] justify-center`}>Transactions</div>
        <div className={`${tab} ml-auto w-[147px] bg-[#2b2b2b] text-[#9a9a9a] pl-[10px] gap-[5px]`}>
          <span>Feedback</span>
          <svg viewBox="0 0 28 26" className="w-[28px] h-[26px] -mt-[10px]"><path d="M2 2h24v15H10l-4 7v-7H2z" fill="#ddd" /><rect x="6" y="5" width="7" height="8" fill="#c0272d" /><rect x="15" y="5" width="8" height="8" fill="#2f8a3b" /></svg>
        </div>
      </div>
      <div className="h-[283px] bg-[#515151] rounded-b-[6px] px-[9px] pl-[11px] pt-[11px] flex flex-col">
        <div className="flex h-[37px] text-[22px]">
          <div className="w-[359px] h-full rounded-[5px] bg-[#2b2b2b] flex items-center justify-end pr-[5px] text-[#777]"><Mag /></div>
          <div className="ml-[11px] w-[228px] h-full rounded-[5px] bg-[#2b2b2b] flex items-center justify-between pl-[8px] pr-[10px] text-[#eee]"><span className={`${ts} mt-[2px]`}>All Directions</span><Caret className="text-[#888]" /></div>
          <div className={`ml-auto w-[126px] h-full rounded-[5px] bg-[#757575] flex items-center justify-center text-[#f2f2f2] ${ts}`}>New Order</div>
          <div className={`ml-[10px] w-[220px] h-full rounded-[5px] bg-[#6a6a6a] flex items-center text-[#f2f2f2]`}>
            <span className={`w-[186px] text-center ${ts}`}>Close (2) Buy, ...</span>
            <span className="w-[34px] h-full border-l border-[#4a4a4a] flex items-center justify-center"><Caret className="text-[#999]" /></span>
          </div>
        </div>
        <div className="mt-[11px] w-[1869px] h-[213px] rounded-[5px] bg-[#2b2b2b] overflow-hidden flex">
          <div className="w-[1836px] shrink-0">
            <div className="h-[58px] pl-[153px] flex items-center text-[22px] text-[#999] whitespace-nowrap">
              {heads.map((h, i) => (
                <div key={i} className={`${cols[i]} ${hpads[i]} h-[38px] flex items-center shrink-0 overflow-hidden ${i === 15 ? "" : "border-r border-[#484848]"}`}>{h}</div>
              ))}
              <span className="ml-[136px] text-[#aaa]">Close</span>
            </div>
            <div className="flex flex-col gap-[10px]">
              {rows.map((r, i) => <PositionRow key={i} r={r} />)}
            </div>
            <div className="mt-[10px] pl-[9px] flex gap-[10px]">
              {tiles.map(([t, w, long]) => (
                <div key={t} className={`${w} h-[59px] shrink-0 rounded-t-[6px] bg-[#404040] relative flex justify-center pt-[11px] whitespace-nowrap overflow-hidden`}>
                  <div className={`flex items-start h-[32px] text-[22px] text-[#a8a8a8] leading-[32px] ${long ? "gap-[6px]" : "gap-[10px]"}`}>
                    <span>{t}</span>
                    <span className={`${long ? "w-[26px]" : "w-[30px]"} h-[32px] rounded-[5px] bg-[#2b2b2b] flex items-center justify-center`}><Info className="text-[#6a6a6a]" /></span>
                  </div>
                  <div className="absolute left-[10px] right-[10px] bottom-[5px] h-[2px] bg-[#222]" />
                </div>
              ))}
            </div>
          </div>
          <div className="ml-[8px] w-[18px] flex flex-col items-center pt-[52px] text-[#888]">
            <svg viewBox="0 0 16 13" className="w-[16px] h-[13px]" fill="currentColor"><path d="M8 0l8 13H0z" /></svg>
            <div className="mt-[2px] w-[15px] h-[83px] rounded-[7px] bg-[#7a7a7a]" />
            <Caret className="mt-[44px] w-[16px] h-[13px]" />
          </div>
        </div>
      </div>
    </div>
  );
}

function StatusBar() {
  return (
    <div className="flex-1 flex items-center text-[21px] text-[#8f8f8f] whitespace-nowrap">
      <span className="ml-[10px] w-[10px] h-[10px] rounded-full bg-[#119a2d]" />
      <span className="ml-[10px]">04:05 28.08.2015 | O: 186.316 | H: 186.429 | L: 186.316 | C: 186.403 | V: 82</span>
      <span className="ml-auto text-[23px]">Current Time:</span>
      <div className="ml-[10px] w-[138px] h-[30px] rounded-[5px] bg-[#2b2b2b] flex items-center justify-between pl-[9px] pr-[9px] text-[22px]"><span>UTC+7</span><Caret className="text-[#888]" /></div>
      <span className="ml-[10px] w-[195px] text-[22px]">08:34 28.08.2015</span>
      <div className="w-[92px] h-[30px] rounded-[5px] bg-[#2b2b2b] flex items-center justify-between pl-[10px] pr-[3px] text-[15px] font-bold text-[#ccc]"><span>ON</span><span className="w-[40px] h-[24px] rounded-[4px] bg-[#4a4a4a]" /></div>
      <span className="ml-[32px] mr-[10px]">98ms / 103ms</span>
    </div>
  );
}

export default function App() {
  return (
    <div className="w-[2560px] h-[1600px] overflow-hidden bg-[#3a3a3a] flex flex-col [font-family:'Liberation_Sans',sans-serif] [-webkit-text-stroke:0.3px_currentColor]">
      <BrowserBar />
      <MenuBar />
      <div className="h-[1417px] flex pl-[10px] pt-[2px] shrink-0">
        <LeftColumn />
        <div className="ml-[10px] w-[1890px] flex flex-col">
          <div className="flex">
            <div className="w-[1820px] flex flex-col">
              <div className="h-[45px] flex items-start">
                <ChartTab label="GBPJPY, D1" />
                <ChartTab label="XAUUSD, D1" className="ml-[11px]" />
                <ChartTab label="XAGUSD, D1" className="ml-[11px]" />
                <ChartTab label="GBPJPY, m5" active className="ml-[12px]" />
                <div className="ml-[11px] w-[36px] h-[38px] rounded-[5px] bg-[#2b2b2b] flex items-center justify-center text-[28px] text-[#777]">+</div>
              </div>
              <div className="h-[1030px] bg-[#515151] rounded-[6px] rounded-tl-none pl-[11px] pt-[10px]">
                <Chart />
                <div className="h-[35px] w-[1800px] flex items-center justify-between text-[#888]">
                  <svg viewBox="0 0 12 24" className="w-[12px] h-[24px]" fill="currentColor"><path d="M12 0v24L0 12z" /></svg>
                  <div className="flex items-center gap-[6px]"><span className="w-[16px] h-[22px] rounded-full bg-[#888]" /><svg viewBox="0 0 12 24" className="w-[12px] h-[24px]" fill="currentColor"><path d="M0 0v24l12-12z" /></svg></div>
                </div>
              </div>
            </div>
            <Toolbar />
          </div>
          <Lower />
        </div>
      </div>
      <StatusBar />
    </div>
  );
}
